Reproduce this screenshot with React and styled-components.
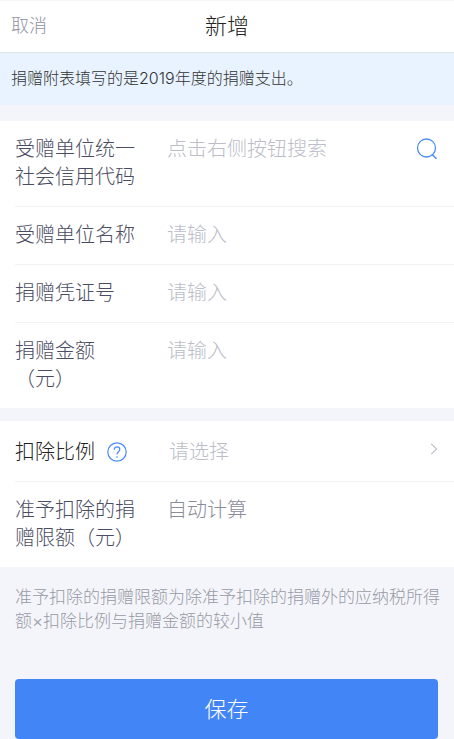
import React from "react"
import styled, { createGlobalStyle } from "styled-components"

const GlobalStyle = createGlobalStyle`
  * {
    box-sizing: border-box;
  }
  body {
    margin: 0;
    background: #f4f5fa;
  }
  body, button, input, select {
    font-family: Inter, "Noto Sans CJK SC", sans-serif;
    font-weight: 300;
  }
`

const Header = styled.header`
  display: grid;
  grid-template-columns: 1fr auto 1fr;
  align-items: center;
  height: 53px;
  padding: 0 11px 2px;
  background: #fff;
  border-top: 1px solid #f7f7f8;
  border-bottom: 1px solid #dfe3ea;
`

const CancelButton = styled.button`
  justify-self: start;
  padding: 0;
  border: 0;
  background: none;
  color: #8f92a1;
  font-size: 18px;
  line-height: 28px;
  cursor: pointer;
`

const Title = styled.h1`
  margin: 0;
  color: #222;
  font-size: 22px;
  font-weight: 300;
  line-height: 28px;
`

const Notice = styled.p`
  margin: 0 0 16px;
  padding: 13px 11px 15px;
  background: #e8f3ff;
  color: #333;
  font-size: 16px;
  line-height: 24px;
`

const Section = styled.section`
  margin-bottom: 13px;
  padding-left: 15px;
  background: #fff;
`

const Row = styled.div`
  display: flex;
  align-items: flex-start;
  padding: ${(props) => (props.$tall ? "17px 16px 15px 0" : "14px 16px 15px 0")};
  border-bottom: 1px solid #f3f3f5;

  &:last-child {
    border-bottom: 0;
  }
`

const LabelBox = styled.div`
  display: flex;
  align-items: center;
  flex: 0 0 152px;
  padding-right: 24px;
`

const Label = styled.label`
  color: ${(props) => (props.$dark ? "#222" : "#4a4d62")};
  font-size: 20px;
  line-height: 28px;
`

const Input = styled.input`
  flex: 1;
  min-width: 0;
  height: 28px;
  padding: 0;
  border: 0;
  outline: none;
  background: none;
  color: #8a8c9c;
  font-size: 20px;
  line-height: 28px;

  &::placeholder {
    color: ${(props) => (props.readOnly ? "#8a8c9c" : "#bbbdc9")};
    opacity: 1;
  }
`

const Select = styled.select`
  flex: 1;
  min-width: 0;
  height: 28px;
  padding: 0 0 0 2px;
  border: 0;
  outline: none;
  appearance: none;
  background: none;
  color: #bbbdc9;
  font-size: 20px;
  line-height: 28px;
`

const IconButton = styled.button`
  display: flex;
  align-items: center;
  height: 28px;
  padding: 0;
  border: 0;
  background: none;
  color: #4a8cf7;
  cursor: pointer;
`

const HelpButton = styled(IconButton)`
  margin-left: 12px;
`

const Arrow = styled.span`
  display: flex;
  align-items: center;
  height: 22px;
  color: #bbbdc9;
`

const Hint = styled.p`
  margin: 0;
  padding: 5px 0 0 15px;
  color: #979aa5;
  font-size: 17px;
  line-height: 24px;
`

const SaveButton = styled.button`
  display: block;
  width: calc(100% - 31px);
  height: 60px;
  margin: 46px 16px 0 15px;
  padding: 0 0 4px;
  border: 0;
  border-radius: 4px;
  background: #4285f6;
  color: #fff;
  font-size: 22px;
  cursor: pointer;
`

const SearchIcon = () => (
  <svg width="22" height="22" viewBox="0 0 22 22" fill="none" stroke="currentColor">
    <circle cx="10.5" cy="10" r="9" strokeWidth="1.3" />
    <path d="M15.8 16.2l4.7 4.6" strokeWidth="1.5" />
  </svg>
)

const HelpIcon = () => (
  <svg width="20" height="20" viewBox="0 0 20 20" fill="none" stroke="currentColor">
    <circle cx="10" cy="10" r="9.2" strokeWidth="1.2" />
    <path
      d="M7.2 7.7c0-1.7 1.1-2.8 2.8-2.8s2.8 1 2.8 2.6c0 2.1-2.8 2.4-2.8 5"
      strokeWidth="1.2"
    />
    <circle cx="10" cy="15" r="0.8" fill="currentColor" stroke="none" />
  </svg>
)

const ArrowIcon = () => (
  <svg width="8" height="12" viewBox="0 0 8 12" fill="none" stroke="currentColor">
    <path d="M1.2 0.8L6.6 6l-5.4 5.2" strokeWidth="1.1" />
  </svg>
)

const fields = [
  {
    id: "code",
    label: "受赠单位统一社会信用代码",
    placeholder: "点击右侧按钮搜索",
    search: true,
  },
  { id: "name", label: "受赠单位名称", placeholder: "请输入" },
  { id: "voucher", label: "捐赠凭证号", placeholder: "请输入" },
  { id: "amount", label: "捐赠金额（元）", placeholder: "请输入" },
]

class App extends React.Component {
  state = {
    code: "",
    name: "",
    voucher: "",
    amount: "",
  }

  onChangeField = (event) => {
    this.setState({ [event.target.id]: event.target.value })
  }

  render() {
    const fieldList = fields.map((field) => (
      <Row key={field.id}>
        <LabelBox>
          <Label htmlFor={field.id}>{field.label}</Label>
        </LabelBox>
        <Input
          id={field.id}
          placeholder={field.placeholder}
          value={this.state[field.id]}
          onChange={this.onChangeField}
        />
        {field.search && (
          <IconButton type="button" aria-label="搜索">
            <SearchIcon />
          </IconButton>
        )}
      </Row>
    ))

    return (
      <div>
        <GlobalStyle />
        <Header>
          <CancelButton type="button">取消</CancelButton>
          <Title>新增</Title>
        </Header>
        <Notice>捐赠附表填写的是2019年度的捐赠支出。</Notice>
        <Section>{fieldList}</Section>
        <Section>
          <Row $tall>
            <LabelBox>
              <Label htmlFor="ratio" $dark>
                扣除比例
              </Label>
              <HelpButton type="button" aria-label="帮助">
                <HelpIcon />
              </HelpButton>
            </LabelBox>
            <Select id="ratio">
              <option>请选择</option>
            </Select>
            <Arrow>
              <ArrowIcon />
            </Arrow>
          </Row>
          <Row>
            <LabelBox>
              <Label htmlFor="limit">准予扣除的捐赠限额（元）</Label>
            </LabelBox>
            <Input id="limit" placeholder="自动计算" readOnly />
          </Row>
        </Section>
        <Hint>
          准予扣除的捐赠限额为除准予扣除的捐赠外的应纳税所得额×扣除比例与捐赠金额的较小值
        </Hint>
        <SaveButton type="button">保存</SaveButton>
      </div>
    )
  }
}
export default App
